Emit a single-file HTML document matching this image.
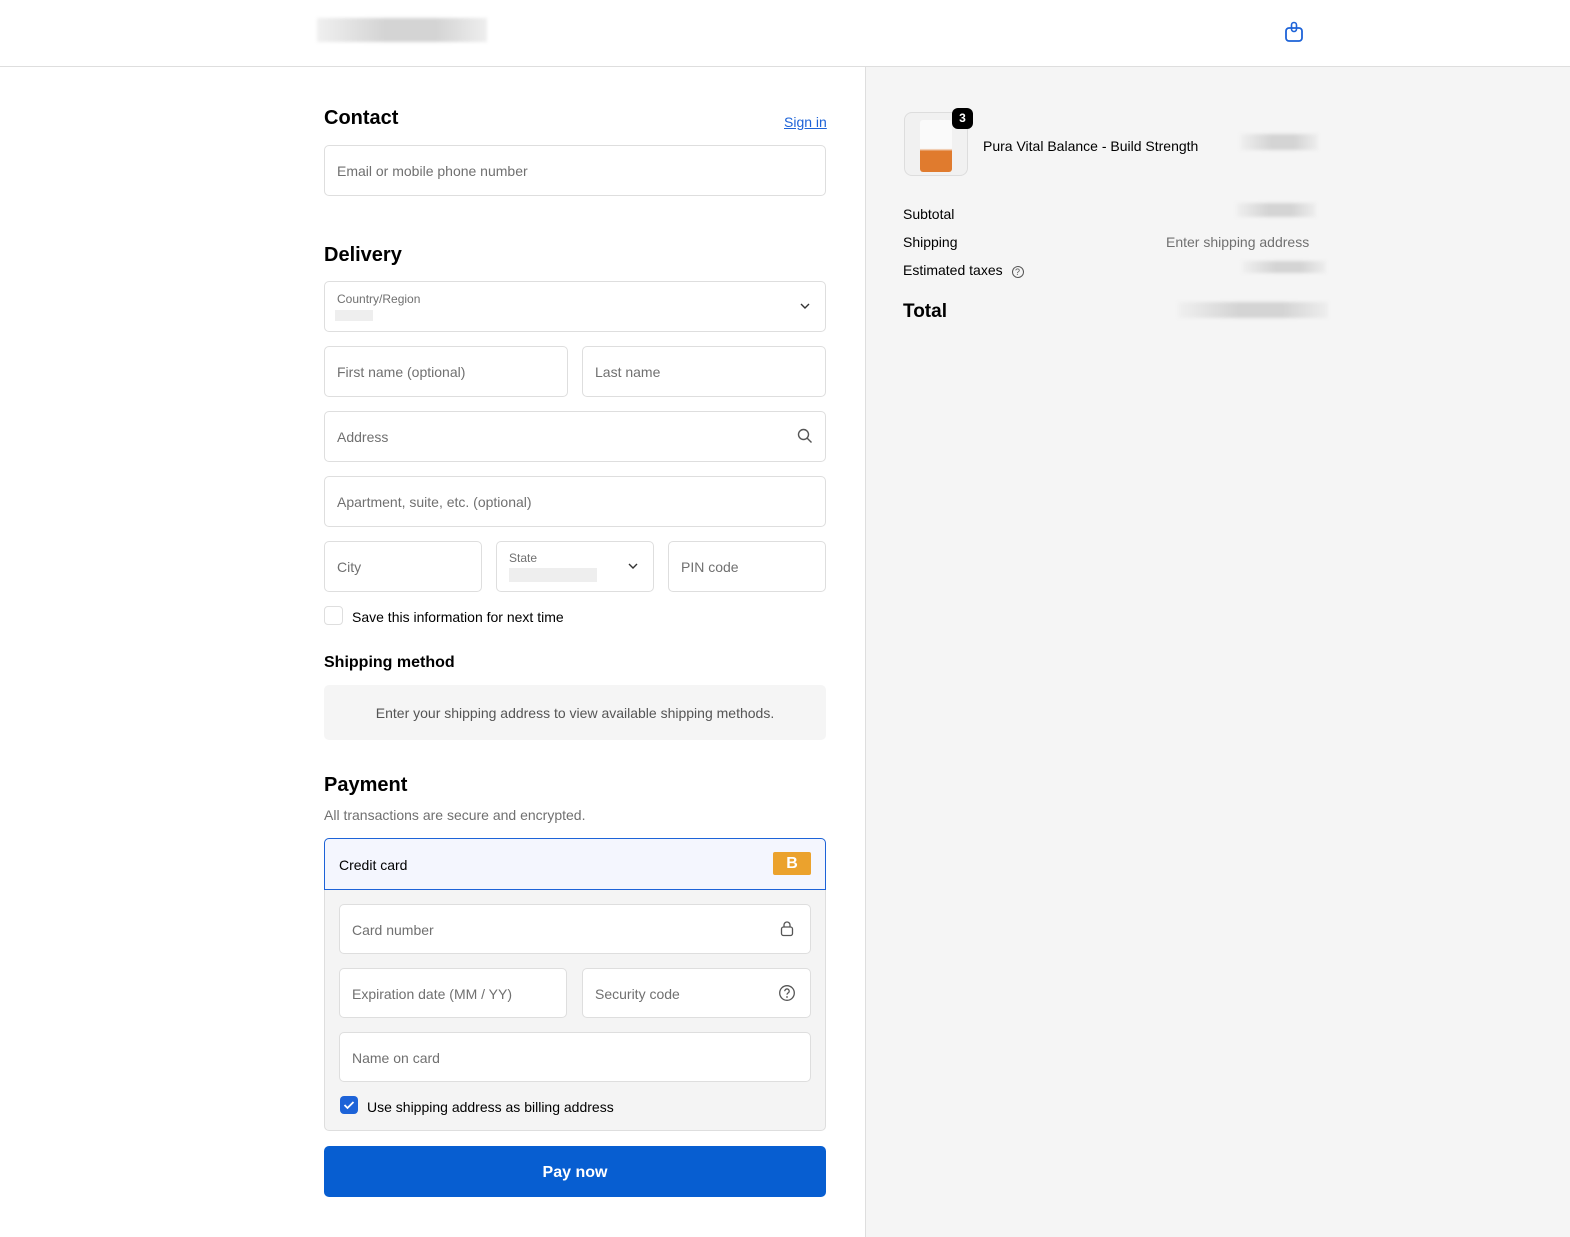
<!DOCTYPE html>
<html><head><meta charset="utf-8"><style>
*{box-sizing:border-box;margin:0;padding:0}
body{width:1570px;height:1237px;font-family:"Liberation Sans","DejaVu Sans",sans-serif;color:#000;background:#fff;position:relative;overflow:hidden;font-size:14px}
.abs{position:absolute}
.hdr{left:0;top:0;width:1570px;height:67px;border-bottom:1px solid #dedede;background:#fff}
.right{left:865px;top:67px;width:705px;height:1170px;background:#f5f5f5;border-left:1px solid #dedede}
.inp{position:absolute;border:1px solid #dedede;border-radius:5px;background:#fff;height:51px;color:#707070;font-size:14px;padding-left:12px;line-height:51px}
h2{position:absolute;font-size:20px;font-weight:600;left:324px}
.blur{position:absolute;background:linear-gradient(90deg,#f0f0f0,#d4d4d4 40%,#d4d4d4 70%,#eee);filter:blur(1.5px)}
</style></head><body>
<div class="abs hdr"></div>
<div class="blur" style="left:317px;top:18px;width:170px;height:24px"></div>
<svg class="abs" style="left:1284px;top:21px" width="20" height="22" viewBox="0 0 20 22"><rect x="2" y="7" width="16" height="13" rx="3" fill="none" stroke="#1d63d8" stroke-width="1.8"/><rect x="7.5" y="1.5" width="5" height="9" rx="2.5" fill="none" stroke="#1d63d8" stroke-width="1.6"/></svg>
<div class="abs right"></div>

<h2 style="top:107px">Contact</h2>
<a class="abs" style="left:784px;top:114px;color:#1d63d8;font-size:14px;text-decoration:underline">Sign in</a>
<div class="inp" style="left:324px;top:145px;width:502px">Email or mobile phone number</div>

<h2 style="top:244px">Delivery</h2>
<div class="inp" style="left:324px;top:281px;width:502px;line-height:normal"><div style="font-size:12px;margin-top:10px">Country/Region</div><div style="width:38px;height:11px;background:#eee;margin-top:4px;margin-left:-2px"></div></div>
<svg class="abs" style="left:799px;top:301px" width="12" height="10"><path d="M2 3l4 4 4-4" fill="none" stroke="#333" stroke-width="1.4"/></svg>
<div class="inp" style="left:324px;top:346px;width:244px">First name (optional)</div>
<div class="inp" style="left:582px;top:346px;width:244px">Last name</div>
<div class="inp" style="left:324px;top:411px;width:502px">Address</div>
<svg class="abs" style="left:797px;top:428px" width="16" height="16"><circle cx="6.5" cy="6.5" r="5" fill="none" stroke="#555" stroke-width="1.4"/><path d="M10 10l4.5 4.5" stroke="#555" stroke-width="1.4"/></svg>
<div class="inp" style="left:324px;top:476px;width:502px">Apartment, suite, etc. (optional)</div>
<div class="inp" style="left:324px;top:541px;width:158px">City</div>
<div class="inp" style="left:496px;top:541px;width:158px;line-height:normal"><div style="font-size:12px;margin-top:9px">State</div><div style="width:88px;height:14px;background:#eee;margin-top:3px"></div></div>
<svg class="abs" style="left:627px;top:561px" width="12" height="10"><path d="M2 3l4 4 4-4" fill="none" stroke="#333" stroke-width="1.4"/></svg>
<div class="inp" style="left:668px;top:541px;width:158px">PIN code</div>
<div class="abs" style="left:324px;top:606px;width:19px;height:19px;border:1px solid #dedede;border-radius:4px"></div>
<div class="abs" style="left:352px;top:609px;font-size:14px">Save this information for next time</div>
<div class="abs" style="left:324px;top:654px;font-size:16px;font-weight:600">Shipping method</div>
<div class="abs" style="left:324px;top:685px;width:502px;height:55px;background:#f5f5f5;border-radius:5px;text-align:center;line-height:57px;color:#555;font-size:14px">Enter your shipping address to view available shipping methods.</div>

<h2 style="top:774px">Payment</h2>
<div class="abs" style="left:324px;top:807px;color:#707070;font-size:14px">All transactions are secure and encrypted.</div>
<div class="abs" style="left:324px;top:838px;width:502px;height:293px;border:1px solid #dedede;border-radius:5px;background:#f4f4f4"></div>
<div class="abs" style="left:324px;top:838px;width:502px;height:52px;border:1px solid #1d63d8;border-radius:5px 5px 0 0;background:#f4f6fe;padding-left:14px;line-height:52px;font-size:14px">Credit card</div>
<div class="abs" style="left:773px;top:852px;width:38px;height:23px;background:#eba22d;border-radius:2px;color:#fff;font-weight:700;font-size:16px;text-align:center;line-height:23px">B</div>
<div class="inp" style="left:339px;top:904px;width:472px;height:50px">Card number</div>
<svg class="abs" style="left:780px;top:920px" width="14" height="17"><rect x="1.5" y="7" width="11" height="8.5" rx="2" fill="none" stroke="#555" stroke-width="1.3"/><path d="M4 7V5a3 3 0 016 0v2" fill="none" stroke="#555" stroke-width="1.3"/></svg>
<div class="inp" style="left:339px;top:968px;width:228px;height:50px">Expiration date (MM / YY)</div>
<div class="inp" style="left:582px;top:968px;width:229px;height:50px">Security code</div>
<svg class="abs" style="left:778px;top:984px" width="18" height="18"><circle cx="9" cy="9" r="7.3" fill="none" stroke="#555" stroke-width="1.3"/><path d="M6.8 7.2a2.2 2.2 0 114 1.2c-.9.6-1.8 1-1.8 2.2" fill="none" stroke="#555" stroke-width="1.3"/><circle cx="9" cy="13" r=".9" fill="#555"/></svg>
<div class="inp" style="left:339px;top:1032px;width:472px;height:50px">Name on card</div>
<div class="abs" style="left:340px;top:1096px;width:18px;height:18px;background:#1d63d8;border-radius:4px"></div>
<svg class="abs" style="left:340px;top:1096px" width="18" height="18"><path d="M4.5 9l3 3 6-6" fill="none" stroke="#fff" stroke-width="1.8"/></svg>
<div class="abs" style="left:367px;top:1099px;font-size:14px">Use shipping address as billing address</div>
<div class="abs" style="left:324px;top:1146px;width:502px;height:51px;background:#075ed1;border-radius:5px;color:#fff;font-weight:700;font-size:16px;text-align:center;line-height:53px">Pay now</div>

<div class="abs" style="left:904px;top:112px;width:64px;height:64px;border:1px solid #ddd;border-radius:8px;background:#f1f1f1"></div>
<div class="abs" style="left:920px;top:120px;width:32px;height:52px;background:linear-gradient(#fafafa 55%,#e07b2e 60%);border-radius:3px"></div>
<div class="abs" style="left:952px;top:108px;width:21px;height:21px;background:#000;border-radius:6px;color:#fff;font-size:12px;font-weight:700;text-align:center;line-height:21px">3</div>
<div class="abs" style="left:983px;top:138px;font-size:14px">Pura Vital Balance - Build Strength</div>
<div class="blur" style="left:1240px;top:134px;width:78px;height:16px"></div>
<div class="abs" style="left:903px;top:206px">Subtotal</div>
<div class="blur" style="left:1236px;top:203px;width:80px;height:14px"></div>
<div class="abs" style="left:903px;top:234px">Shipping</div>
<div class="abs" style="left:1166px;top:234px;color:#707070">Enter shipping address</div>
<div class="abs" style="left:903px;top:262px">Estimated taxes <span style="display:inline-block;width:12px;height:12px;border:1px solid #555;border-radius:50%;font-size:9px;text-align:center;line-height:11px;margin-left:5px;color:#555">?</span></div>
<div class="blur" style="left:1242px;top:261px;width:84px;height:12px"></div>
<div class="abs" style="left:903px;top:301px;font-size:19px;font-weight:700">Total</div>
<div class="blur" style="left:1178px;top:302px;width:150px;height:16px"></div>
</body></html>
